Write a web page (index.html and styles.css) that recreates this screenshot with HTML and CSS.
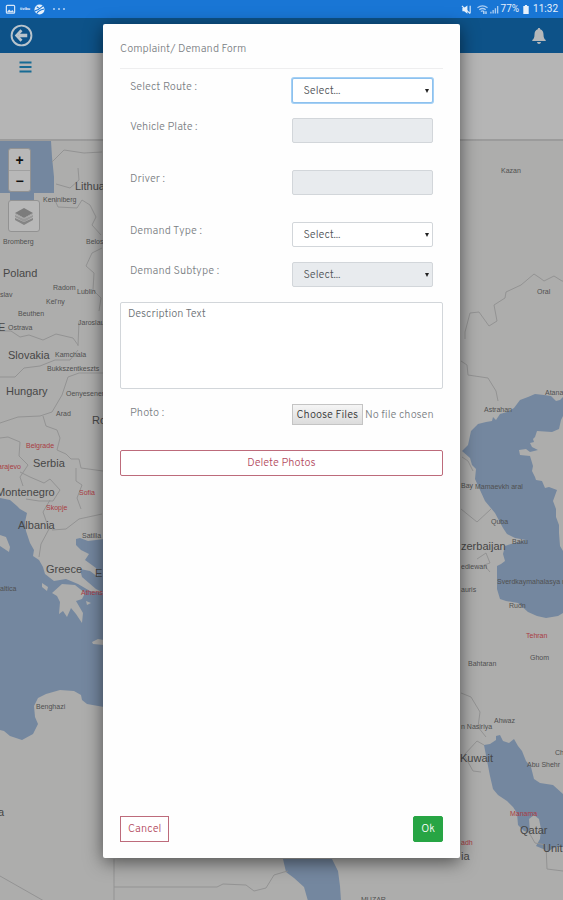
FILE: index.html
```html
<!DOCTYPE html>
<html lang="en">
<head>
<meta charset="utf-8">
<meta name="viewport" content="width=device-width, initial-scale=1">
<title>Complaint/ Demand Form</title>
<link rel="stylesheet" href="styles.css">
</head>
<body>
<div class="status-bar">
  <div class="status-group">
    <svg class="icon-status" viewBox="0 0 12 12" aria-hidden="true"><rect x="1.5" y="1.5" width="9" height="8.5" rx="1" fill="none" stroke="#d6e6f8" stroke-width="1.3"/><path d="M2 9l2.500-3 2 2 1.500-1.500L10 9z" fill="#d6e6f8"/></svg>
    <span class="carrier">tivibu</span>
    <svg class="icon-status" viewBox="0 0 12 12" aria-hidden="true"><circle cx="6" cy="6" r="5.500" fill="#e6f0fb"/><path d="M1 7.500Q5 6.500 10 2M3 10.500Q4.500 7 11 5.500M3 3l3 2" fill="none" stroke="#1976d5" stroke-width="1.200"/></svg>
    <span class="dots"><i></i><i></i><i></i></span>
  </div>
  <div class="status-group status-right">
    <svg class="icon-status" viewBox="0 0 12 12" aria-hidden="true"><path d="M1.500 4h2L7 1.500v9L3.500 8h-2z" fill="#e6f0fb"/><path d="M1 2l9 8.500M10 2v8" stroke="#e6f0fb" stroke-width="1.200"/></svg>
    <svg class="icon-status icon-wifi" viewBox="0 0 12 12" aria-hidden="true"><path d="M.5 4Q6 0 11.500 4M2.500 6.300Q6 3.500 9.500 6.300M4.200 8.300Q6 6.800 7.800 8.300" fill="none" stroke="#a9ccf2" stroke-width="1.400"/><path d="M7.500 8v3M9.800 11V8" stroke="#e6f0fb" stroke-width="1.200"/></svg>
    <svg class="icon-status icon-signal" viewBox="0 0 10 12" aria-hidden="true"><path d="M1 10.500V8.500M3.500 10.500V6.500M6 10.500V4.500M8.500 10.500V2" stroke="#a9ccf2" stroke-width="1.500"/></svg>
    <span>77%</span>
    <svg class="icon-battery" viewBox="0 0 6 10" aria-hidden="true"><path d="M1.800 0h2.400v1H6v9H0V1h1.800z" fill="#e6f0fb"/></svg>
    <span>11:32</span>
  </div>
</div>
<header class="app-header">
  <button class="icon-button" type="button" aria-label="Back">
    <svg class="icon-back" viewBox="0 0 22 22" aria-hidden="true"><circle cx="11" cy="11" r="9.500" fill="none" stroke="#b9c4cc" stroke-width="1.800"/><path d="M16.500 11H8" stroke="#b9c4cc" stroke-width="3.400"/><path d="M11 6L6.300 11l4.700 5" fill="none" stroke="#b9c4cc" stroke-width="2.600"/></svg>
  </button>
  <button class="icon-button" type="button" aria-label="Notifications">
    <svg class="icon-bell" viewBox="0 0 14 16" aria-hidden="true"><path d="M7 0c.8 0 1.200.5 1.200 1.300C10.600 2 11.500 4 11.500 6.500c0 3.200.8 4.500 2.200 5.500v1H.3v-1c1.400-1 2.200-2.300 2.200-5.500C2.500 4 3.400 2 5.800 1.300 5.800.5 6.200 0 7 0zM5 14h4c-.2 1.200-1 2-2 2s-1.800-.8-2-2z" fill="#b5b8ba"/></svg>
  </button>
</header>
<div class="toolbar">
  <button class="icon-button" type="button" aria-label="Menu">
    <svg class="icon-menu" viewBox="0 0 12 12" aria-hidden="true"><path d="M0 1.500h12M0 6h12M0 10.500h12" stroke="#176b94" stroke-width="1.900"/></svg>
  </button>
</div>
<main class="map">
  <svg class="map-canvas" viewBox="0 140 563 760" preserveAspectRatio="xMidYMin slice" role="img" aria-label="Map">
    <g class="water">
      <path d="M0 140H51l1 16 2 20v16H34v8H10v-8H0z"/>
      <path d="M0 497L10 499 17 505 20 508 27 512 25 521 26 530 30 542 34 549 33 555 39 559 43 566 45 573 54 580 66 578 78 583 90 590 104 592V706L87 703 82 699 81 694 74 690 60 689 46 693 38 697 34 705 35 716 38 723 33 733 22 739 10 735 4 730 0 729z"/>
      <path d="M76 538l4-1 8 3 16-2v54l-8-4-14-12-2-8 10 2 8 6-2-9-11-8 4-6-8-4-5-5z"/>
      <path d="M462 450L468 444 471 430 478 423 486 421 492 420 493 416 496 419 500 413 507 411 514 407 520 399 528 396 535 393 544 394 551 395 556 400 560 399 563 396V415L561 419 559 428 552 431 537 430 535 436 533 438 534 441 530 442 532 446 538 449 530 451 526 448 519 449 520 454 530 455 533 465 532 470 535 476 536 479 542 480 545 487 549 486 557 489 553 500 556 508 556 516 559 524 559 532 560 545 563 550V612L558 615 546 617 537 615 528 611 518 602 506 600 500 598 497 588V565L501 563 505 560 503 553 505 545 511 543 526 539 515 537 507 533 503 527 495 512 485 500 480 489 475 478 476 468 472 464 470 457z"/>
      <path d="M484 744L490 743 496 739 496 735 500 734 503 740 509 742 514 738 518 745 522 750 526 760 531 766 534 778 540 782 553 784 563 793V846L556 846 548 850 536 845 540 838 541 828 539 818 534 814 529 818 530 832 524 830 518 824 517 812 513 806 507 800 498 794 493 788 490 775z"/>
      <path d="M283 858h49l6 12 2 15 1 15h-33l-4-14-10-9-8-6z"/>
    </g>
    <g class="island">
      <path d="M0 534l6 2 4 10-1 5-9-6z"/>
      <path d="M52 592l10-9 13 1 10 8-3 6-6 2 7 12-1 10-6-9-5-6-4 9-4-6-4 3 1-12-3-6z"/>
      <path d="M92 641l6-3 6 1v5l-11-1zM42 582l6 4-1 4-5-4zM86 600l5 2-4 2z"/>
    </g>
    <g class="border">
      <path d="M52 161l12-12 20 3 18-1M56 183l14 4 9-8-1-12M54 197l4 9 19 1 5-8 8 5 6 12-4 8 9 10M102 247l-10 5-6 13 8 7-1 17 8 8-2 13M0 330l11 0 9 6 9-2 14 5 13-6 17 4 5 7M78 345l1-25M0 376l15 0 9-9 16-2 15-6 15 0 8-10M103 372l-24 0-11 4-6 18-10 17-12 4-22 1-18 6M43 415l3 10 11 4 3 8-3 12 9 4 5 5 8 0 2 9 22 3M0 437l8-1 12 5-1 14 9 9-8 12 3 9M20 471l10 5 14 6 6-4 10 11-7 11-14 0-13-2M76 467l0 13 6 4-5 13 4 11M50 499l-7 12 6 17-8 15-2 13M52 529l14-1 13-10 23-5"/>
      <path d="M465 338l0-7 5-19 9-1 10 14 8-5-3-16 11-7 1-6 15-7 13-11 6 4 4 3 10-5 8 5 11 1M461 360l6 4 1 10 20 3 8 13 2 10M462 456l6 4 5 10M461 508l16 13 14-13M477 558l9-6 4 10-6 2 6 7M461 692l10 4 9 15-2 15 8 10M484 744l-7-4-13 14 9 16 8 1M527 828l8 14 11 2 1 24 16 2"/>
      <path d="M114 858v42M114 886h103l6-3 23 1 8 6 12-3 8-13 10-3 4-1M0 875l44 25"/>
    </g>
    <g class="place">
      <text x="43" y="201">Keniniberg</text><text x="3" y="243">Bromberg</text><text x="86" y="243">Belost</text>
      <text x="53" y="289">Radom</text><text x="77" y="293">Lublin</text><text x="46" y="303">Kel'ny</text><text x="0" y="296">slav</text><text x="18" y="315">Beuthen</text><text x="8" y="329">Ostrava</text><text x="78" y="324">Jaroslau</text><text x="55" y="356">Kamchala</text><text x="47" y="370">Bukkszentkeszts</text><text x="66" y="395">Oenyesenerdo</text><text x="56" y="415">Arad</text><text x="82" y="537">Satilla</text><text x="36" y="708">Benghazi</text><text x="0" y="590">altica</text>
      <text x="501" y="172">Kazan</text><text x="537" y="293">Oral</text><text x="484" y="411">Astrahan</text><text x="545" y="394">Atanau</text><text x="461" y="487">Bay</text><text x="475" y="488">Mamaevkh aral</text><text x="491" y="523">Quba</text><text x="512" y="543">Baku</text><text x="461" y="568">ediewan</text><text x="461" y="591">auris</text><text x="497" y="583">Sverdkaymahalasya m</text><text x="509" y="607">Rudn</text><text x="530" y="659">Ghom</text><text x="468" y="665">Bahtaran</text><text x="494" y="722">Ahwaz</text><text x="461" y="728">n Nasiriya</text><text x="527" y="766">Abu Shehr</text><text x="555" y="754">Ch</text><text x="361" y="901">MUZAR</text>
    </g>
    <g class="capital">
      <text x="26" y="447">Belgrade</text><text x="-2" y="468">arajevo</text><text x="79" y="494">Sofia</text><text x="46" y="509">Skopje</text><text x="81" y="594">Athens</text><text x="526" y="637">Tehran</text><text x="510" y="815">Manama</text><text x="461" y="844">adh</text>
    </g>
    <g class="country">
      <text x="75" y="189">Lithuania</text><text x="3" y="276">Poland</text><text x="-2" y="330">E</text><text x="8" y="358">Slovakia</text><text x="6" y="394">Hungary</text><text x="92" y="423">Ro</text><text x="33" y="466">Serbia</text><text x="-4" y="495">Montenegro</text><text x="18" y="528">Albania</text><text x="46" y="572">Greece</text><text x="95" y="576">E</text><text x="-2" y="815">a</text><text x="461" y="549">zerbaijan</text><text x="460" y="761">Kuwait</text><text x="520" y="833">Qatar</text><text x="543" y="851">Unit</text><text x="461" y="859">ia</text>
    </g>
  </svg>
  <div class="map-controls">
    <div class="zoom-control">
      <button type="button" aria-label="Zoom in">+</button>
      <button type="button" aria-label="Zoom out">−</button>
    </div>
    <button class="layers-control" type="button" aria-label="Layers">
      <svg class="icon-layers" viewBox="0 0 20 20" aria-hidden="true"><path d="M1 12l9 4 9-4v2l-9 5-9-5z" fill="#858585"/><path d="M1 9l9 4 9-4v2l-9 5-9-5z" fill="#999"/><path d="M10 2l9 5-9 5-9-5z" fill="#7c7c7c"/><path d="M1 7l9 5 9-5v1l-9 5-9-5z" fill="#a2a2a2"/></svg>
    </button>
  </div>
</main>
<div class="overlay">
  <form class="dialog" role="dialog" aria-labelledby="dialog-title">
    <h1 class="dialog-title" id="dialog-title">Complaint/ Demand Form</h1>
    <div class="fields">
      <div class="field">
        <label for="route">Select Route :</label>
        <div class="select-wrap"><select class="control focused" id="route"><option>Select...</option></select></div>
      </div>
      <div class="field spaced">
        <label for="plate">Vehicle Plate :</label>
        <div><input class="control" id="plate" type="text" disabled></div>
      </div>
      <div class="field spaced">
        <label for="driver">Driver :</label>
        <div><input class="control" id="driver" type="text" disabled></div>
      </div>
      <div class="field">
        <label for="type">Demand Type :</label>
        <div class="select-wrap"><select class="control" id="type"><option>Select...</option></select></div>
      </div>
      <div class="field">
        <label for="subtype">Demand Subtype :</label>
        <div class="select-wrap"><select class="control" id="subtype" disabled><option>Select...</option></select></div>
      </div>
      <textarea class="description" aria-label="Description Text" placeholder="Description Text"></textarea>
      <div class="field">
        <label for="photo">Photo :</label>
        <div class="file-wrap"><input class="file" id="photo" type="file" multiple></div>
      </div>
    </div>
    <button class="button button-danger" type="button">Delete Photos</button>
    <div class="dialog-footer">
      <button class="button button-danger button-cancel" type="button">Cancel</button>
      <button class="button button-success" type="submit">Ok</button>
    </div>
  </form>
</div>
</body>
</html>
```

FILE: styles.css
```css
* {
  box-sizing: border-box;
}

body {
  margin: 0;
  min-height: 100vh;
  display: flex;
  flex-direction: column;
  position: relative;
  background: #adadac;
  color: #7b8084;
  font: 300 11px/18px Overpass, "Open Sans", sans-serif;
}

button,
input,
select,
textarea {
  font: inherit;
  color: inherit;
}

svg {
  display: block;
}

.status-bar {
  position: relative;
  z-index: 2;
  height: 18px;
  display: flex;
  align-items: center;
  justify-content: space-between;
  padding: 0 5px;
  background: #1976d5;
  color: #e6f0fb;
  font: 10px/18px Roboto, sans-serif;
}

.status-group {
  display: flex;
  align-items: center;
  gap: 4px;
}

.status-right {
  gap: 2px;
}

.carrier {
  font-size: 4px;
  font-weight: bold;
}

.dots {
  display: flex;
  gap: 3px;
  margin-left: 4px;
}

.dots i {
  width: 2px;
  height: 2px;
  border-radius: 1px;
  background: #b5d3f3;
}

.icon-status {
  width: 11px;
  height: 11px;
}

.icon-wifi {
  margin-left: 3px;
}

.icon-signal {
  width: 9px;
}

.icon-battery {
  width: 6px;
  height: 9px;
  margin: 0 2px;
}

.app-header {
  height: 35px;
  display: flex;
  align-items: center;
  justify-content: space-between;
  padding: 0 17px 0 10px;
  background: #0d5288;
}

.icon-button {
  padding: 0;
  border: 0;
  background: none;
}

.icon-back {
  width: 23px;
  height: 23px;
}

.icon-bell {
  width: 14px;
  height: 16px;
}

.toolbar {
  height: 88px;
  padding: 8px 19px;
  border-bottom: 2px solid #9b9b9b;
  background: #b5b5b5;
}

.icon-menu {
  width: 13px;
  height: 12px;
}

.map {
  position: relative;
  flex: 1;
  overflow: hidden;
}

.map-canvas {
  position: absolute;
  width: 100%;
  height: 100%;
  font-family: "Liberation Sans", sans-serif;
  font-weight: normal;
}

.water {
  fill: #74879f;
}

.island {
  fill: #adadac;
}

.border {
  fill: none;
  stroke: #939393;
  stroke-width: 1;
}

.place {
  fill: #505050;
  font-size: 7px;
}

.capital {
  fill: #a93c43;
  font-size: 7px;
}

.country {
  fill: #474747;
  font-size: 11px;
}

.map-controls {
  position: relative;
  display: flex;
  flex-direction: column;
  align-items: flex-start;
  gap: 8px;
  padding: 7px 8px;
}

.zoom-control {
  display: flex;
  flex-direction: column;
  border: 1px solid #929292;
  border-radius: 3px;
  background: #b8b8b8;
}

.zoom-control button {
  width: 21px;
  height: 21px;
  padding: 0;
  border: 0;
  background: none;
  color: #111;
  font: bold 14px/18px "Liberation Sans", sans-serif;
}

.zoom-control button + button {
  border-top: 1px solid #a0a0a0;
}

.layers-control {
  width: 32px;
  height: 32px;
  display: grid;
  place-items: center;
  padding: 0;
  border: 1px solid #929292;
  border-radius: 3px;
  background: #b8b8b8;
}

.icon-layers {
  width: 20px;
  height: 20px;
}

.overlay {
  position: absolute;
  inset: 0;
  z-index: 3;
  display: flex;
  padding: 24px 103px 42px;
}

.dialog {
  flex: 1;
  min-width: 0;
  display: flex;
  flex-direction: column;
  padding: 16px 17px;
  border-radius: 2px;
  background: #fefefe;
  box-shadow: 0 4px 18px rgba(0, 0, 0, 0.55);
}

.dialog-title {
  margin: 0 0 9px;
  padding-bottom: 10px;
  border-bottom: 1px solid #eeeeef;
  font-size: 11px;
  font-weight: inherit;
}

.fields {
  display: flex;
  flex-direction: column;
  gap: 15px;
}

.field {
  display: grid;
  grid-template-columns: 1fr 1fr;
  min-height: 25px;
}

.field > * {
  min-width: 0;
  padding: 0 10px;
}

.spaced {
  margin-bottom: 12px;
}

.control {
  display: block;
  width: 100%;
  height: 25px;
  padding: 0 11px;
  border: 1px solid #d2d6da;
  border-radius: 2px;
  background: #fff;
  color: #4f5458;
  opacity: 1;
  appearance: none;
}

.control:disabled {
  background: #e8ebee;
}

.focused {
  border-color: #8dc1ee;
  box-shadow: 0 0 0 1px #a4d0f5;
}

.select-wrap {
  position: relative;
}

.select-wrap::after {
  content: "";
  position: absolute;
  top: 11px;
  right: 14px;
  border: 2px solid transparent;
  border-top: 4px solid #222;
  border-bottom: 0;
  pointer-events: none;
}

.description {
  display: block;
  width: 100%;
  height: 87px;
  padding: 2px 7px;
  border: 1px solid #d2d6da;
  border-radius: 2px;
  background: #fff;
  resize: none;
}

.description::placeholder {
  color: #6c7175;
}

.field > .file-wrap {
  padding-right: 0;
}

.file {
  display: block;
  width: 100%;
  height: 22px;
}

.file::file-selector-button {
  height: 21px;
  margin: 0 2px 0 0;
  padding: 0 4px;
  border: 1px solid #c4c4c4;
  border-radius: 0;
  background: linear-gradient(#f5f5f5, #dcdcdc);
  color: #333;
  font: inherit;
}

.button {
  height: 26px;
  padding: 0 7px;
  border: 1px solid;
  border-radius: 2px;
  background: #fff;
}

.button-danger {
  margin-top: 21px;
  border-color: #bd6b7b;
  color: #b34b60;
}

.dialog-footer {
  display: flex;
  justify-content: space-between;
  margin-top: auto;
}

.button-cancel {
  margin-top: 0;
  border-radius: 0;
}

.button-success {
  border-color: #27a544;
  background: #27a544;
  color: #fff;
}
```
